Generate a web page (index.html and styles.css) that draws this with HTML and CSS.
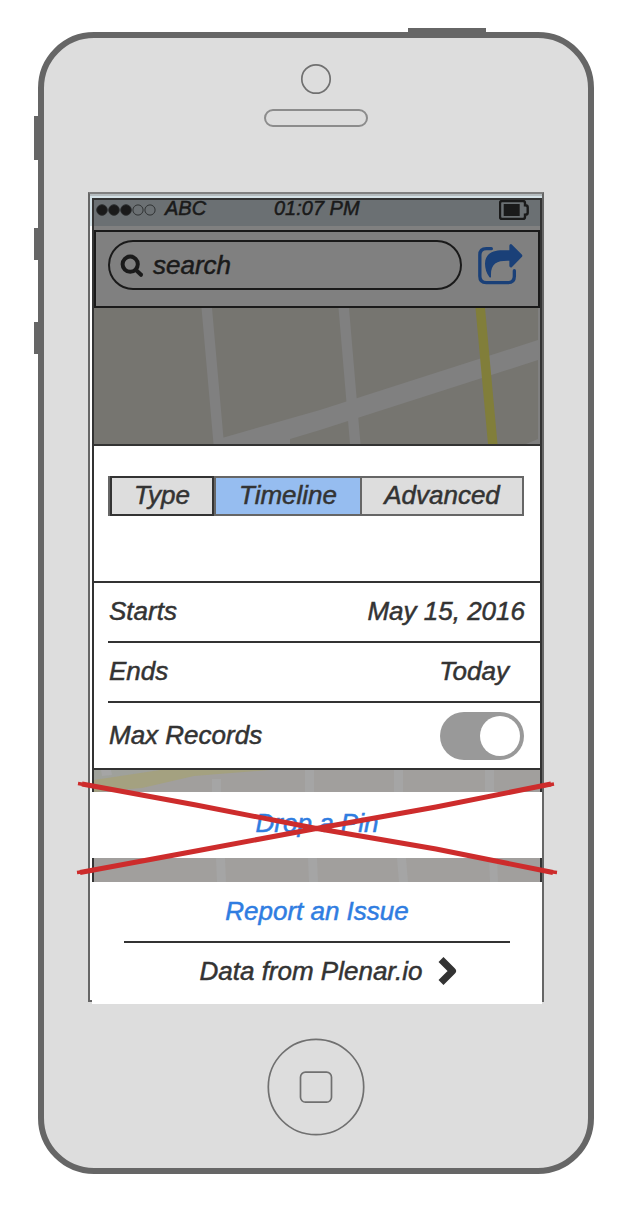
FILE: index.html
```html
<!DOCTYPE html>
<html lang="en">
<head>
<meta charset="utf-8">
<title>Map filters</title>
<link rel="stylesheet" href="styles.css">
</head>
<body>
<div class="phone">
  <span class="key key-power"></span>
  <span class="key key-mute"></span>
  <span class="key key-up"></span>
  <span class="key key-down"></span>
  <svg class="camera" viewBox="0 0 32 32"><circle cx="16" cy="16" r="14.2"/></svg>
  <div class="speaker"></div>

  <div class="screen">
    <div class="app">
      <header class="status">
        <svg class="signal" viewBox="0 0 60 12">
          <circle class="on" cx="6" cy="6" r="5.3"/><circle class="on" cx="18" cy="6" r="5.3"/><circle class="on" cx="30" cy="6" r="5.3"/>
          <circle cx="42" cy="6" r="5.1"/><circle cx="54" cy="6" r="5.1"/>
        </svg>
        <span class="carrier">ABC</span>
        <span class="clock">01:07 PM</span>
        <svg class="battery" viewBox="0 0 30 20">
          <path d="M3 1h21q2 0 2 2v2.200q2.700 0 2.700 2v5.600q0 2-2.700 2V17q0 2-2 2H3q-2 0-2-2V3q0-2 2-2z"/>
          <rect x="4.700" y="4" width="16" height="12"/>
        </svg>
      </header>

      <div class="toolbar">
        <div class="search">
          <svg class="lens" viewBox="0 0 24 24"><circle cx="10.200" cy="10.200" r="7.600"/><path d="M16 16l5 4.800"/></svg>
          <span>search</span>
        </div>
        <svg class="share" viewBox="0 0 140 128">
          <path class="box" d="M43 17H28Q8.500 17 8.500 36V100Q8.500 119 28 119H93Q112 119 112 100V83"/>
          <path class="arrow" d="M100 4Q102 2 105 5L135 35Q137 38 135 41L105 72Q102 75 100 73Q97 72 97 68V53C60 52 40 60 42 101Q41 106 37 102Q24 84 24 62C24 32 48 22 76 22H97V8Q97 5 100 4Z"/>
        </svg>
      </div>

      <svg class="map" viewBox="0 0 446 136">
        <path class="road" d="M107.500 0H118L130 136H119.500Z"/>
        <path class="road" d="M244.500 0H255L266.500 136H256Z"/>
        <path class="road" d="M128 130L226 102L444 32V52L226 122L196 131V136H128Z"/>
        <path class="road" d="M444 0h2V136H432L444 131Z"/>
        <path class="highway" d="M381.500 0H391L403.500 136H394Z"/>
      </svg>

      <section class="tabs-area">
        <div class="tabs">
          <div class="tab tab-type">Type</div>
          <div class="tab tab-current">Timeline</div>
          <div class="tab tab-advanced">Advanced</div>
        </div>
      </section>

      <section class="settings">
        <div class="row"><span>Starts</span><span>May 15, 2016</span></div>
        <div class="row row-ends"><span>Ends</span><span>Today</span></div>
        <div class="row row-max"><span class="max-label">Max Records</span><span class="toggle"><span class="knob"></span></span></div>
      </section>

      <svg class="strip strip-a" viewBox="0 0 446 22">
        <path class="tint" d="M0 0H66L0 10Z"/>
        <path class="lane" d="M7 0h10l1 5-10 1zM118 9h9v13h-9zM211 0h9v22h-9zM300 0h9v22h-9zM391 0h9v22h-9z"/>
        <path class="avenue" d="M0 10L66 0H176L100 6L48 18L0 22Z"/>
      </svg>
    </div>

    <div class="action action-pin">Drop a Pin</div>
    <div class="gap">
      <svg class="strip strip-b" viewBox="0 0 446 24">
        <path class="lane" d="M122 0h9l1 24h-9zM214 0h9l1 24h-9zM303 0h9l2 24h-9zM395 0h8l1 24h-8z"/>
      </svg>
    </div>
    <footer class="sheet">
      <div class="action action-report">Report an Issue</div>
      <div class="rule"></div>
      <div class="source">
        <span>Data from Plenar.io</span>
        <svg class="chevron" viewBox="0 0 20 30"><path d="M3 3.500L14.500 15L3 26.500"/></svg>
      </div>
    </footer>
  </div>

  <svg class="home" viewBox="0 0 98 98">
    <circle cx="49" cy="49" r="47.700"/>
    <rect x="33.500" y="34.200" width="31" height="30" rx="5"/>
  </svg>

  <svg class="strike" viewBox="0 0 484 100">
    <path class="thick" d="M6 8L120 29L238 52L360 73L477 96.500M4 96.500L120 75L243 52L360 31L475 8"/>
    <path class="tip" d="M2 7.500L14 9.500M1 96.500L14 95M466 10L478 8M468 95L481 96.500"/>
  </svg>
</div>
</body>
</html>
```
FILE: styles.css
```css
* { box-sizing: border-box; }

body {
  margin: 0;
  width: 625px;
  height: 1218px;
  padding: 32px 0 0 38px;
  overflow: hidden;
  background: #fff;
  color: #333;
  font: italic 26px/30px "Liberation Sans", Arial, sans-serif;
  -webkit-text-stroke: 0.5px;
  white-space: nowrap;
}

svg { display: block; fill: none; flex: none; }

.phone {
  position: relative;
  display: flex;
  flex-direction: column;
  align-items: center;
  width: 556px;
  height: 1142px;
  padding-top: 25px;
  border: 6px solid #666;
  border-radius: 56px;
  background: #ddd;
}

.key { position: absolute; background: #666; }
.key-power { left: 364px; top: -10px; width: 78px; height: 4px; }
.key-mute { left: -10px; top: 78px; width: 4px; height: 44px; }
.key-up { left: -10px; top: 190px; width: 4px; height: 32px; }
.key-down { left: -10px; top: 284px; width: 4px; height: 32px; }

.camera { width: 32px; height: 32px; stroke: #707070; stroke-width: 1.7; }
.speaker {
  width: 104px;
  height: 18px;
  margin-top: 14px;
  border: 2px solid #8c8c8c;
  border-radius: 9px;
}

.screen {
  width: 456px;
  height: 810px;
  margin-top: 65px;
  padding: 4px 0 0 2px;
  border: 2px solid #666;
  border-top-color: #808080;
  background: linear-gradient(#b5bcbf 0 2px, #d4e1e6 2px 32px, #fff 32px);
  flex: none;
}

.app {
  display: flex;
  flex-direction: column;
  height: 594px;
  border: 2px solid #333;
  border-bottom: 0;
  background: #fff;
}

.status {
  display: grid;
  grid-template-columns: 70px 110px 85px 1fr;
  height: 30px;
  padding-left: 2px;
  background: linear-gradient(#6b7073 26px, #808080 26px);
  color: #1a1a1a;
  font-size: 20px;
  line-height: 16px;
}
.signal { width: 60px; height: 12px; margin-top: 4px; stroke: #292b2c; stroke-width: 0.9; }
.signal .on { fill: #1a1a1a; }
.carrier { margin-left: -1px; }
.clock { margin-left: -2px; }
.battery { width: 30px; height: 20px; justify-self: end; margin-right: 11px; stroke: #1a1a1a; stroke-width: 2.4; }
.battery rect { fill: #1a1a1a; stroke: none; }

.toolbar {
  display: flex;
  align-items: flex-start;
  gap: 15px;
  height: 78px;
  padding: 8px 0 0 12px;
  border: 2px solid #1a1a1a;
  background: #808080;
  color: #1a1a1a;
}
.search {
  display: flex;
  align-items: center;
  gap: 9px;
  width: 354px;
  height: 50px;
  padding-left: 10px;
  border: 2px solid #1a1a1a;
  border-radius: 25px;
}
.lens { width: 24px; height: 24px; margin-top: 2px; stroke: #1a1a1a; stroke-width: 4; stroke-linecap: round; }
.share { width: 46.7px; height: 42.7px; margin-top: 3px; }
.share .box { stroke: #1a4078; stroke-width: 10; stroke-linecap: round; }
.share .arrow { fill: #1a4078; }

.map { width: 446px; height: 136px; background: #767570; }
.map .road { fill: #808080; }
.map .highway { fill: #817e3a; }

.tabs-area { height: 137px; padding: 30px 16px 0 14px; border-top: 2px solid #333; }
.tabs {
  display: grid;
  grid-template-columns: 104px 148px 1fr;
  height: 40px;
  border: solid #666;
  border-width: 0 2px;
  background: #ddd;
  text-align: center;
  line-height: 34px;
}
.tab { border: 2px solid #666; }
.tab-type { border-color: #333; }
.tab-current { background: #96bdf0; }
.tab-advanced { border-width: 2px 0; }

.settings { border: solid #333; border-width: 2px 0; }
.row {
  display: flex;
  justify-content: space-between;
  align-items: center;
  height: 60px;
  margin-left: 14px;
  padding: 0 15px 2px 1px;
  border-bottom: 2px solid #333;
}
.row-ends { padding-right: 31px; }
.row-max { height: 65px; padding: 0 16px 0 1px; border-bottom: 0; }
.max-label { padding-bottom: 2px; }
.toggle {
  display: flex;
  justify-content: flex-end;
  width: 84px;
  height: 48px;
  padding: 4px;
  border-radius: 24px;
  background: #999;
}
.knob { width: 40px; height: 40px; border-radius: 50%; background: #fff; }

.strip { width: 446px; background: #a19f9d; }
.strip-a { height: 22px; }
.strip-b { height: 24px; }
.lane { fill: #a5a5a5; }
.tint { fill: #9fa19b; }
.avenue { fill: #a4a180; }

.action { background: #fff; color: #2f7de1; text-align: center; }
.action-pin { height: 66px; line-height: 62px; }
.gap { height: 24px; border: solid #333; border-width: 0 2px; }
.sheet { height: 122px; background: #fff; }
.action-report { height: 59px; line-height: 58px; }
.rule { height: 2px; margin: 0 32px; background: #333; }
.source { display: flex; align-items: center; gap: 15px; height: 56px; padding-left: 107.500px; }
.chevron { width: 20px; height: 30px; stroke: #333; stroke-width: 7; stroke-linejoin: round; }

.home { width: 98px; height: 98px; margin-top: 36px; stroke: #707070; stroke-width: 1.7; }

.strike { position: absolute; left: 32px; top: 738px; width: 484px; height: 100px; stroke: #cd2c2c; }
.strike .thick { stroke-width: 5; }
.strike .tip { stroke-width: 3.5; }
```
